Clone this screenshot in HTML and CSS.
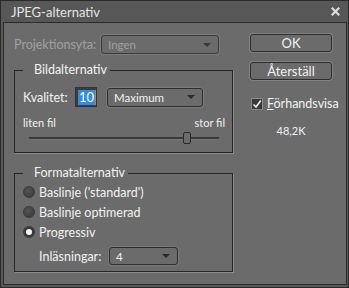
FILE: index.html
```html
<!DOCTYPE html>
<html lang="sv">
<head>
    <meta charset="UTF-8">
    <title>JPEG-alternativ</title>
    <link rel="stylesheet" href="styles.css">
</head>
<body>
    <div class="window">
        <div class="titlebar">
            <span class="title">JPEG-alternativ</span>
            <svg class="close" width="9" height="9" viewBox="0 0 9 9">
                <path d="M1.5 1.5 L7.5 7.5 M7.5 1.5 L1.5 7.5" stroke="#dcdcdc" stroke-width="2.2" stroke-linecap="square"/>
            </svg>
        </div>
        <div class="content">
            <div class="main">
                <div class="row projection">
                    <label class="label disabled">Projektionsyta:</label>
                    <div class="select select-wide disabled"><span>Ingen</span><i class="arrow"></i></div>
                </div>

                <fieldset class="group image-group">
                    <legend>Bildalternativ</legend>
                    <div class="row quality">
                        <label class="label">Kvalitet:</label>
                        <div class="num"><span class="num-sel">10</span><span class="num-caret"></span></div>
                        <div class="select select-quality"><span>Maximum</span><i class="arrow"></i></div>
                    </div>
                    <div class="scale">
                        <span>liten fil</span>
                        <span>stor fil</span>
                    </div>
                    <div class="slider">
                        <div class="track"></div>
                        <div class="thumb" style="left: calc(83.3% - 4px);"></div>
                    </div>
                </fieldset>

                <fieldset class="group format-group">
                    <legend>Formatalternativ</legend>
                    <div class="radio-row"><span class="radio"></span><span>Baslinje ('standard')</span></div>
                    <div class="radio-row"><span class="radio"></span><span>Baslinje optimerad</span></div>
                    <div class="radio-row"><span class="radio checked"></span><span>Progressiv</span></div>
                    <div class="row scans">
                        <label class="label">Inläsningar:</label>
                        <div class="select select-scans"><span>4</span><i class="arrow"></i></div>
                    </div>
                </fieldset>
            </div>

            <div class="side">
                <button class="btn">OK</button>
                <button class="btn">Återställ</button>
                <div class="check-row">
                    <span class="checkbox">
                        <svg width="10" height="10" viewBox="0 0 10 10">
                            <path d="M1.5 5.5 L4 8 L8.8 1.5" fill="none" stroke="#f2f2f2" stroke-width="1.6"/>
                        </svg>
                    </span>
                    <span><u>F</u>örhandsvisa</span>
                </div>
                <div class="size">48,2K</div>
            </div>
        </div>
    </div>
</body>
</html>
```

FILE: styles.css
```css
* {
    margin: 0;
    padding: 0;
    box-sizing: border-box;
}

body {
    font-family: Lato, "Liberation Sans", sans-serif;
    font-size: 12.5px;
    color: #f2f2f2;
    background-color: #2b2b2b;
}

.window {
    width: 349px;
    height: 288px;
    border: 1px solid #2a2a2a;
    background-color: #575757;
    display: flex;
    flex-direction: column;
}

.titlebar {
    height: 21px;
    display: flex;
    align-items: center;
    justify-content: space-between;
    padding: 0 8px 0 10px;
    font-size: 13px;
    color: #e4e4e4;
}

.content {
    flex: 1;
    margin: 0 1px 2px 2px;
    border: 1px solid #2a2a2a;
    background-color: #6b6b6b;
    display: flex;
    padding: 0 0 0 10px;
}

.main {
    width: 219px;
}

.row {
    display: flex;
    align-items: center;
}

.label {
    flex: none;
}

.disabled {
    color: #a0a0a0;
}

.projection {
    margin-top: 12px;
}

.projection .label {
    width: 87px;
}

/* dropdowns */
.select {
    height: 19px;
    border: 1px solid #2e2e2e;
    border-radius: 3px;
    box-shadow: 0 0 0 1px rgba(255, 255, 255, 0.1);
    display: flex;
    align-items: center;
    justify-content: space-between;
    padding: 0 7px 0 6px;
    font-size: 11.5px;
}

.select.disabled {
    border-color: #3c3c3c;
}

.arrow {
    width: 0;
    height: 0;
    border-left: 4px solid transparent;
    border-right: 4px solid transparent;
    border-top: 4px solid #2a2a2a;
}

.select.disabled .arrow {
    border-top-color: #3a3a3a;
}

.select-wide {
    width: 118px;
}

/* group boxes */
.group {
    border: 1px solid #262626;
    box-shadow: 1px 1px 0 #8a8a8a;
    padding: 0 7px 0 8px;
}

.group legend {
    padding: 0 3px 0 11px;
    font-size: 12.5px;
    line-height: 14px;
}

.image-group {
    margin-top: 9px;
    height: 90px;
}

.quality {
    margin-top: 10px;
}

.quality .label {
    width: 52px;
}

.num {
    width: 22px;
    height: 20px;
    background-color: #3c3c3c;
    border: 1px solid #333;
    display: flex;
    align-items: center;
    padding-left: 2px;
}

.num-sel {
    background-color: #2f8de4;
    color: #fff;
    font-size: 13px;
    line-height: 15px;
    padding: 0 1px;
}

.num-caret {
    width: 2px;
    height: 15px;
    background-color: #e0781c;
}

.select-quality {
    width: 96px;
    margin-left: 10px;
}

.scale {
    display: flex;
    justify-content: space-between;
    font-size: 11px;
    line-height: 13px;
    margin-top: 9px;
}

.slider {
    position: relative;
    height: 12px;
    margin: 3px 6px 0 6px;
    display: flex;
    align-items: center;
}

.track {
    width: 100%;
    height: 3px;
    background-color: #3a3a3a;
    border-bottom: 1px solid #777;
}

.thumb {
    position: absolute;
    top: 0;
    width: 8px;
    height: 12px;
    background-color: #6b6b6b;
    border: 1px solid #2a2a2a;
    border-radius: 2px;
}

.format-group {
    margin-top: 13px;
    height: 106px;
}

.radio-row {
    height: 20px;
    display: flex;
    align-items: center;
}

.format-group .radio-row:first-of-type {
    margin-top: 2px;
}

.radio {
    width: 12px;
    height: 12px;
    border-radius: 50%;
    background: radial-gradient(circle at 40% 35%, #555 0%, #3e3e3e 70%);
    border: 1px solid #3a3a3a;
    margin-right: 4px;
}

.radio.checked {
    background: #f4f4f4;
    border: 3px solid #3a3a3a;
}

.scans {
    margin-top: 5px;
    padding-left: 16px;
}

.scans .label {
    width: 70px;
}

.select-scans {
    width: 69px;
    height: 18px;
}

/* right column */
.side {
    width: 82px;
    margin-left: 17px;
    display: flex;
    flex-direction: column;
}

.btn {
    height: 18px;
    margin-top: 11px;
    background-color: #6b6b6b;
    color: #f2f2f2;
    font-family: inherit;
    font-size: 13px;
    border: 1px solid #2e2e2e;
    border-radius: 3px;
    box-shadow: 0 0 0 1px rgba(255, 255, 255, 0.15);
}

.btn + .btn {
    margin-top: 10px;
}

.check-row {
    display: flex;
    align-items: center;
    margin-top: 16px;
    padding-left: 1px;
    font-size: 12.5px;
}

.checkbox {
    width: 12px;
    height: 12px;
    background-color: #3a3a3a;
    border: 1px solid #8a8a8a;
    margin-right: 4px;
    display: flex;
    align-items: center;
    justify-content: center;
}

.size {
    margin-top: 13px;
    text-align: center;
    font-size: 11px;
}
```
